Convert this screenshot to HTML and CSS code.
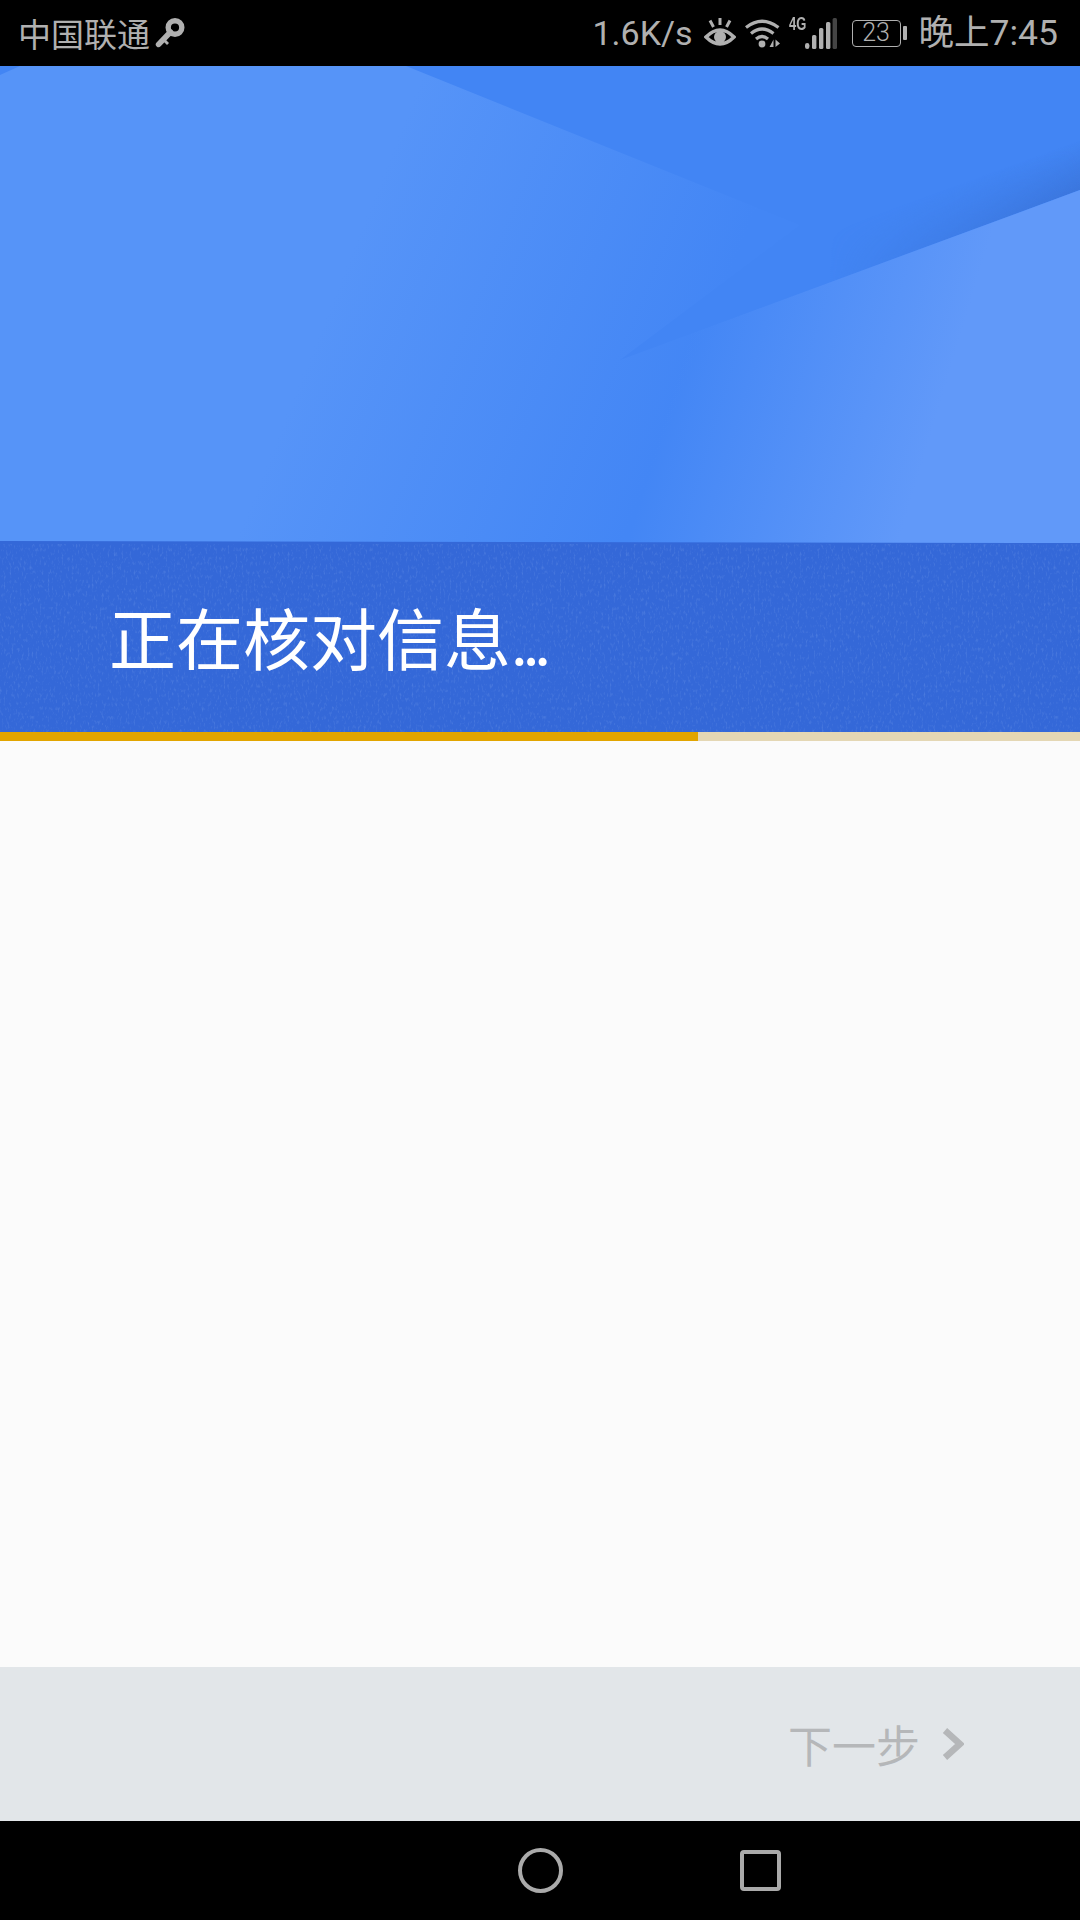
FILE: index.html
```html
<!DOCTYPE html>
<html lang="zh-CN">
<head>
<meta charset="utf-8">
<title>正在核对信息</title>
<link rel="stylesheet" href="styles.css">
</head>
<body>
<div class="screen">
  <header class="status">
    <div class="status-left">
      <span class="carrier">中国联通</span>
      <svg class="ic-key" viewBox="0 0 30 31" aria-hidden="true">
        <path d="M15.5 14 L3.6 26.4" fill="none" stroke="#b0b0b0" stroke-width="5.6" stroke-linecap="round"/>
        <path d="M7 22 L12 27 L14 25 L9 20 Z" fill="#b0b0b0"/>
        <circle cx="20" cy="9.5" r="6.8" fill="none" stroke="#b0b0b0" stroke-width="5.4"/>
      </svg>
    </div>
    <div class="status-right">
      <span class="speed">1.6K/s</span>
      <svg class="ic-eye" viewBox="0 0 32 30" aria-hidden="true">
        <path d="M2 19 Q16 5 30 19 Q16 33 2 19 Z" fill="none" stroke="#b0b0b0" stroke-width="3.6"/>
        <circle cx="16" cy="19" r="6" fill="#b0b0b0"/>
        <path d="M16 0 V7 M6 2.5 L9.5 9 M26 2.5 L22.5 9" stroke="#b0b0b0" stroke-width="3" fill="none"/>
      </svg>
      <svg class="ic-wifi" viewBox="0 0 36 30" aria-hidden="true">
        <g fill="none" stroke="#b0b0b0" stroke-width="3.2">
          <path d="M1 9.5 Q17 -3 33.5 9.5"/>
          <path d="M6 15.5 Q17 6.5 28.5 15.5"/>
          <path d="M11 21 Q17 16 23 21"/>
        </g>
        <circle cx="17" cy="26" r="3.4" fill="#b0b0b0"/>
        <path d="M24.5 29 L28.5 21.5 V29 Z M30.5 21.5 L35 25.5 L30.5 29 Z" fill="#b0b0b0"/>
      </svg>
      <div class="cell">
        <span class="net">4G</span>
        <svg class="ic-signal" viewBox="0 0 32 32" aria-hidden="true">
          <rect x="0" y="25" width="4.4" height="6" rx="2.2" fill="#b0b0b0"/>
          <rect x="7" y="17" width="4.4" height="14" rx="1.5" fill="#b0b0b0"/>
          <rect x="14" y="10" width="4.4" height="21" rx="1.5" fill="#b0b0b0"/>
          <rect x="21" y="4" width="4.4" height="27" rx="1.5" fill="#b0b0b0"/>
          <rect x="27.6" y="0" width="4.4" height="31" rx="1.5" fill="#444"/>
        </svg>
      </div>
      <div class="battery">
        <span class="battery-body">23</span>
        <span class="battery-cap"></span>
      </div>
      <span class="clock">晚上7:45</span>
    </div>
  </header>

  <section class="hero">
    <svg class="hero-art" viewBox="0 0 1080 666" preserveAspectRatio="none" aria-hidden="true">
      <defs>
        <linearGradient id="gLeft" gradientUnits="userSpaceOnUse" x1="280" y1="364" x2="614" y2="498">
          <stop offset="0" stop-color="#5694f8"/>
          <stop offset="1" stop-color="#4386f5"/>
        </linearGradient>
        <linearGradient id="gRight" gradientUnits="userSpaceOnUse" x1="640" y1="434" x2="889" y2="509">
          <stop offset="0" stop-color="#6199f9" stop-opacity="0"/>
          <stop offset="1" stop-color="#6199f9" stop-opacity="1"/>
        </linearGradient>
        <linearGradient id="gShade" gradientUnits="userSpaceOnUse" x1="1080" y1="124" x2="1064" y2="80">
          <stop offset="0" stop-color="#3870d4" stop-opacity=".7"/>
          <stop offset="1" stop-color="#3870d4" stop-opacity="0"/>
        </linearGradient>
        <linearGradient id="gShadeMask" gradientUnits="userSpaceOnUse" x1="830" y1="0" x2="1080" y2="0">
          <stop offset="0" stop-color="#000"/>
          <stop offset="1" stop-color="#fff"/>
        </linearGradient>
        <mask id="shadeMask" maskUnits="userSpaceOnUse" x="0" y="0" width="1080" height="666">
          <rect width="1080" height="666" fill="url(#gShadeMask)"/>
        </mask>
        <filter id="grain" x="0" y="0" width="100%" height="100%">
          <feTurbulence type="fractalNoise" baseFrequency="0.5 0.22" numOctaves="2" seed="4"/>
          <feColorMatrix type="matrix" values="0 0 0 0 0.45  0 0 0 0 0.62  0 0 0 0 0.95  0 0 0 1.6 -0.85"/>
        </filter>
      </defs>
      <rect width="1080" height="666" fill="#4285f4"/>
      <g mask="url(#shadeMask)">
        <polygon points="1080,124 620,294 590,210 1080,30" fill="url(#gShade)"/>
      </g>
      <polygon points="20,0 406,0 800,159 620,294 1080,124 1080,480 0,480 0,9" fill="url(#gLeft)"/>
      <polygon points="1080,124 560,316 560,480 1080,480" fill="url(#gRight)"/>
      <polygon points="0,475 1080,477 1080,666 0,666" fill="#3468d8"/>
      <rect y="478" width="1080" height="188" filter="url(#grain)" opacity=".3"/>
    </svg>
    <h1 class="title">正在核对信息<span class="dots">...</span></h1>
  </section>

  <div class="progress"><div class="progress-fill"></div></div>

  <main class="content"></main>

  <footer class="actions">
    <span class="next">下一步</span>
    <svg class="ic-chevron" viewBox="0 0 22 32" aria-hidden="true">
      <path d="M3 2.5 L18 16 L3 29.5" fill="none" stroke="#b5b7b9" stroke-width="6.4"/>
    </svg>
  </footer>

  <nav class="nav">
    <span></span>
    <span class="nav-circle"></span>
    <span class="nav-square"></span>
  </nav>
</div>
</body>
</html>
```
FILE: styles.css
```css
* { box-sizing: border-box; }
html, body { margin: 0; padding: 0; }
body {
  width: 1080px;
  height: 1920px;
  overflow: hidden;
  font-family: "Noto Sans CJK SC", "Noto Sans", sans-serif;
}
.screen {
  width: 1080px;
  height: 1920px;
  display: flex;
  flex-direction: column;
  background: #fbfbfb;
}

/* status bar */
.status {
  height: 66px;
  flex: none;
  background: #000;
  color: #b0b0b0;
  display: flex;
  justify-content: space-between;
  align-items: center;
  padding: 0 22px 0 18px;
}
.status-left, .status-right { display: flex; align-items: center; }
.carrier { font-size: 33px; line-height: 40px; }
.ic-key { width: 30px; height: 31px; margin-left: 5px; }
.speed { font-family: Roboto, sans-serif; font-size: 34px; line-height: 40px; }
.ic-eye { width: 32px; height: 30px; margin-left: 11px; }
.ic-wifi { width: 36px; height: 30px; margin-left: 9px; }
.cell { position: relative; width: 48px; height: 32px; margin-left: 8px; }
.net {
  position: absolute;
  left: 0;
  top: -2px;
  font-family: "Liberation Sans", sans-serif;
  font-size: 18px;
  line-height: 18px;
  font-weight: 700;
  transform: scaleX(0.72);
  transform-origin: left center;
}
.ic-signal { position: absolute; right: 0; top: 1px; width: 32px; height: 32px; }
.battery { display: flex; align-items: center; margin-left: 15px; }
.battery-body {
  width: 49px;
  height: 27px;
  border: 1.5px solid #b0b0b0;
  border-radius: 4px;
  font-family: Roboto, sans-serif;
  font-size: 25px;
  font-weight: 300;
  line-height: 24px;
  text-align: center;
}
.battery-cap { width: 4px; height: 14px; margin-left: 2px; background: #b0b0b0; border-radius: 1px; }
.clock { margin-left: 12px; font-family: Roboto, "Noto Sans CJK SC", sans-serif; font-size: 35.5px; line-height: 40px; }

/* hero */
.hero {
  position: relative;
  height: 666px;
  flex: none;
  display: flex;
  align-items: flex-end;
  padding: 0 0 51px 109px;
}
.hero-art { position: absolute; inset: 0; width: 100%; height: 100%; display: block; }
.title {
  position: relative;
  margin: 0;
  color: #fff;
  font-size: 67px;
  line-height: 84px;
  font-weight: 400;
}
.dots { font-size: 60px; letter-spacing: -5px; }

/* progress */
.progress { height: 9px; flex: none; background: #e4d7b4; }
.progress-fill { width: 698px; height: 100%; background: #e2a500; }

.content { flex: 1; background: #fbfbfb; }

/* footer */
.actions {
  height: 154px;
  flex: none;
  background: #e2e6e9;
  display: flex;
  align-items: center;
  justify-content: flex-end;
  padding-right: 116px;
}
.next { color: #b5b7b9; font-size: 44px; line-height: 56px; }
.ic-chevron { width: 22px; height: 32px; margin-left: 22px; }

/* nav */
.nav {
  height: 99px;
  flex: none;
  background: #000;
  display: grid;
  grid-template-columns: repeat(3, 220px);
  justify-content: center;
  justify-items: center;
  align-items: center;
}
.nav-circle { width: 45px; height: 45px; border: 4px solid #aaa; border-radius: 50%; }
.nav-square { width: 41px; height: 41px; border: 4px solid #aaa; border-radius: 4px; }
```
